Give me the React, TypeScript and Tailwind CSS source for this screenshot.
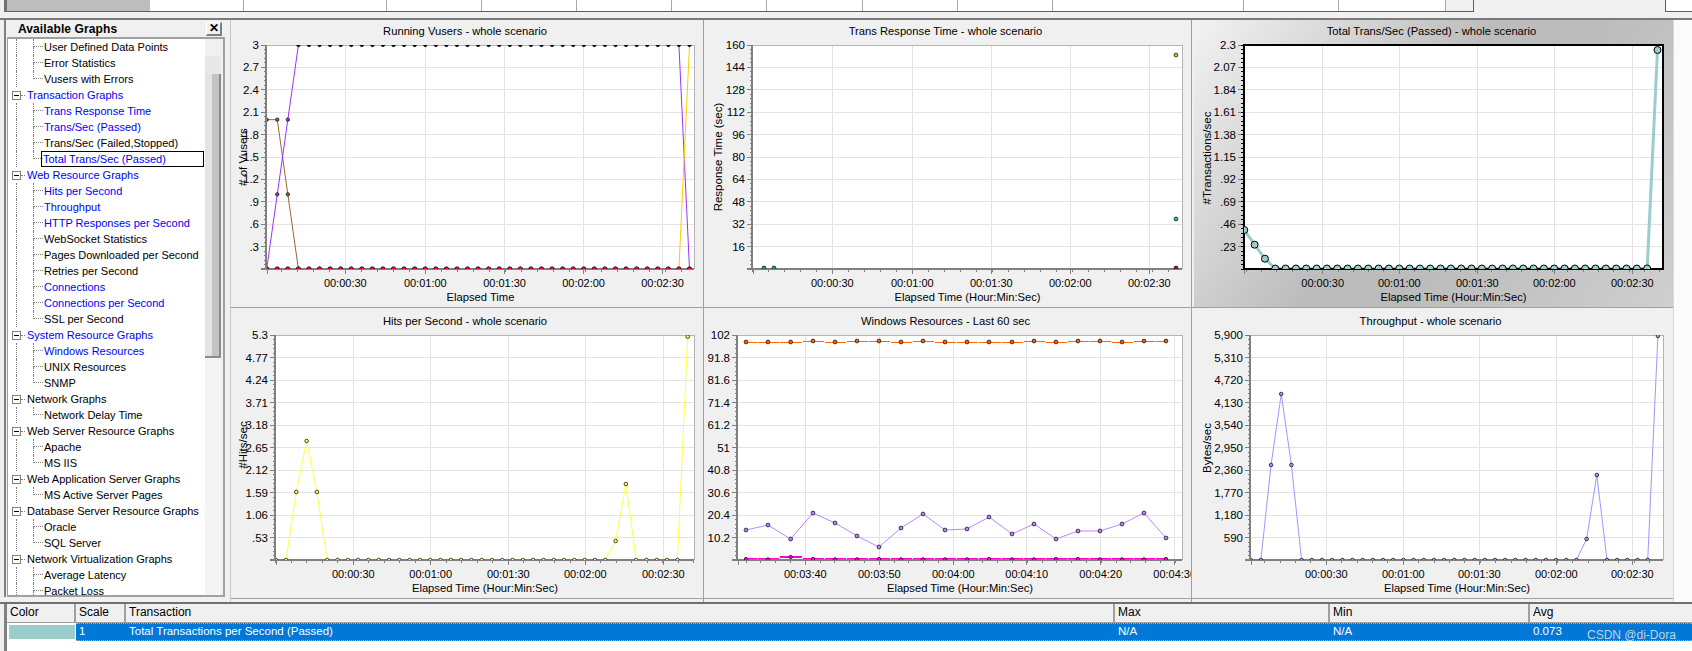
import React from "react";

type Pt = [number, number];
type Series = { color: string; width?: number; pts: Pt[]; r?: number; step?: boolean; noLine?: boolean };
type ChartCfg = {
  title: string; xTitle: string; yTitle?: string; yTitleAt?: Pt;
  x0: number; w: number; top: number; L: number; R: number; T: number; B: number;
  yLabels: string[]; grid: number[]; xLabels: string[]; series: Series[]; selected?: boolean;
  firstRow: boolean; id: string; blackTop?: boolean;
};

const seq = (start: number, dx: number, ys: number[]): Pt[] => ys.map((y, i) => [start + i * dx, y] as Pt);
const fillArr = (n: number, v: number, over: Record<number, number> = {}) =>
  Array.from({ length: n }, (_, i) => (over[i] !== undefined ? over[i] : v));

const y1 = (v: number) => 269 - (v / 3) * 224;
const purple = fillArr(41, 3, { 0: 0, 1: 1, 2: 2, 40: 0 }).map(y1);
const brown = fillArr(41, 0, { 0: 2, 1: 2, 2: 1 }).map(y1);
const gold = fillArr(41, 0, { 40: 3 }).map(y1);
const red = fillArr(41, 0).map(y1);

const z2 = (z: number) => 305 + z / 3;
const ch4 = fillArr(41, 765, { 2: 561, 3: 408, 4: 561, 33: 708, 34: 537, 40: 95 }).map(z2);
const ch6 = fillArr(41, 765, { 2: 480, 3: 267, 4: 480, 33: 702, 34: 510, 40: 93 }).map(z2);
const ch3 = fillArr(41, 268.5, { 0: 230, 1: 244.7, 2: 258.7, 40: 50 });

const x5 = [138, 204, 272, 339, 405, 471, 537, 603, 669, 735, 801, 867, 936, 1002, 1068, 1134, 1200, 1266, 1332, 1398].map((z) => 700 + z / 3);
const zip5 = (zs: number[]): Pt[] => zs.map((z, i) => [x5[i], z2(z)] as Pt);
const orange = [111, 111, 111, 108, 111, 108, 108, 111, 108, 111, 111, 111, 111, 108, 111, 108, 108, 111, 108, 108];
const lilac = [675, 660, 702, 624, 654, 693, 726, 669, 627, 675, 672, 636, 687, 657, 702, 678, 678, 657, 624, 699];
const magenta = [762, 763, 756, 762, 763, 763, 762, 763, 763, 763, 763, 762, 763, 763, 762, 762, 763, 763, 763, 762];

const TIMES = ["00:00:30", "00:01:00", "00:01:30", "00:02:00", "00:02:30"];
const ELAPSED = "Elapsed Time (Hour:Min:Sec)";

const charts: ChartCfg[] = [
  {
    id: "a", title: "Running Vusers - whole scenario", xTitle: "Elapsed Time", yTitle: "# of Vusers", yTitleAt: [243, 157],
    x0: 231, w: 472, top: 38, L: 267, R: 694, T: 45, B: 269, firstRow: true, blackTop: true,
    yLabels: ["3", "2.7", "2.4", "2.1", "1.8", "1.5", "1.2", ".9", ".6", ".3"],
    grid: [345.3, 425.3, 504.6, 583.6, 662.6], xLabels: TIMES,
    series: [
      { color: "#996633", width: 1, pts: seq(266.7, 10.57, brown), r: 1.7 },
      { color: "#9933ff", width: 1, pts: seq(266.7, 10.57, purple), r: 1.7 },
      { color: "#ffcc00", width: 1, pts: seq(266.7, 10.57, gold), r: 1.7 },
      { color: "#ff0055", pts: seq(266.7, 10.57, red), r: 2.2, noLine: true },
    ],
  },
  {
    id: "b", title: "Trans Response Time - whole scenario", xTitle: ELAPSED, yTitle: "Response Time (sec)", yTitleAt: [718, 157],
    x0: 704, w: 487, top: 38, L: 753, R: 1182, T: 45, B: 269, firstRow: true,
    yLabels: ["160", "144", "128", "112", "96", "80", "64", "48", "32", "16"],
    grid: [832.3, 912.3, 991.3, 1070.3, 1149.3], xLabels: TIMES,
    series: [
      { color: "#00aa88", pts: [[764, 268], [774, 268]], r: 1.9, noLine: true },
      { color: "#cccc00", pts: [[1176, 55]], r: 1.9, noLine: true },
      { color: "#00cccc", pts: [[1176, 219]], r: 1.9, noLine: true },
      { color: "#cc0000", pts: [[1176, 268]], r: 1.9, noLine: true },
    ],
  },
  {
    id: "c", title: "Total Trans/Sec (Passed) - whole scenario", xTitle: ELAPSED, yTitle: "#Transactions/sec", yTitleAt: [1207, 158],
    x0: 1194, w: 479, top: 38, L: 1244, R: 1663, T: 45, B: 269, firstRow: true, selected: true,
    yLabels: ["2.3", "2.07", "1.84", "1.61", "1.38", "1.15", ".92", ".69", ".46", ".23"],
    grid: [1322.7, 1399.3, 1477.3, 1554.3, 1632.3], xLabels: TIMES,
    series: [{ color: "#9ccdcd", width: 3, pts: seq(1244.3, 10.33, ch3), r: 3.5 }],
  },
  {
    id: "d", title: "Hits per Second - whole scenario", xTitle: ELAPSED, yTitle: "#Hits/sec", yTitleAt: [243, 445],
    x0: 231, w: 472, top: 329, L: 276, R: 694, T: 335, B: 560, firstRow: false,
    yLabels: ["5.3", "4.77", "4.24", "3.71", "3.18", "2.65", "2.12", "1.59", "1.06", ".53"],
    grid: [353.3, 430.7, 508.3, 585.3, 663.3], xLabels: TIMES,
    series: [{ color: "#ffff44", width: 1, pts: seq(275.7, 10.3, ch4), r: 1.8 }],
  },
  {
    id: "e", title: "Windows Resources - Last 60 sec", xTitle: ELAPSED,
    x0: 704, w: 487, top: 329, L: 738, R: 1182, T: 335, B: 560, firstRow: false,
    yLabels: ["102", "91.8", "81.6", "71.4", "61.2", "51", "40.8", "30.6", "20.4", "10.2"],
    grid: [805.3, 879.3, 953.3, 1026.7, 1100.7, 1174.7],
    xLabels: ["00:03:40", "00:03:50", "00:04:00", "00:04:10", "00:04:20", "00:04:30"],
    series: [
      { color: "#bb88ff", width: 1, pts: zip5(lilac), r: 1.9 },
      { color: "#ff6600", width: 1, pts: zip5(orange), r: 1.9, step: true },
      { color: "#ff00cc", width: 2, pts: zip5(magenta), r: 1.7, step: true },
    ],
  },
  {
    id: "f", title: "Throughput - whole scenario", xTitle: ELAPSED, yTitle: "Bytes/sec", yTitleAt: [1207, 448],
    x0: 1192, w: 481, top: 329, L: 1251, R: 1663, T: 335, B: 560, firstRow: false,
    yLabels: ["5,900", "5,310", "4,720", "4,130", "3,540", "2,950", "2,360", "1,770", "1,180", "590"],
    grid: [1326.3, 1403.3, 1479.3, 1556.3, 1632.3], xLabels: TIMES,
    series: [{ color: "#9999ff", width: 1, pts: seq(1250.7, 10.18, ch6), r: 1.8 }],
  },
];

const stepPath = (pts: Pt[]) => {
  let d = "";
  pts.forEach(([x, y], i) => {
    const left = i === 0 ? x : (pts[i - 1][0] + x) / 2 + 1;
    const right = i === pts.length - 1 ? x : (pts[i + 1][0] + x) / 2;
    const yy = Math.round(y);
    d += `M${left} ${yy}L${right} ${yy}`;
  });
  return d;
};

function Plot({ c }: { c: ChartCfg }) {
  const rowH = (c.B - c.T) / 10;
  const step = (c.grid[1] - c.grid[0]) / 5;
  const ticks: number[] = [];
  for (let x = c.grid[0]; x >= c.L - 1; x -= step) ticks.unshift(x);
  for (let x = c.grid[0] + step; x <= c.R; x += step) ticks.push(x);
  const axis = c.selected ? "#000000" : "#808080";
  const minorY: number[] = [];
  for (let y = c.T; y < c.B; y += rowH / 5) minorY.push(y);
  return (
    <svg className="block h-[252px] w-full shrink-0" viewBox={`${c.x0} ${c.top} ${c.w} 252`}>
      <defs>
        <clipPath id={`clip-${c.id}`}>
          <rect x={c.L} y={c.T} width={c.R - c.L} height={c.B - c.T} />
        </clipPath>
        <clipPath id={`lines-${c.id}`}>
          <rect x={c.L} y={c.T + 1.5} width={c.R - c.L} height={c.B - c.T - 2.5} />
        </clipPath>
      </defs>
      <rect x={c.L} y={c.T} width={c.R - c.L} height={c.B - c.T} fill="#ffffff" />
      <g stroke="#e3e3e3" strokeWidth="1" shapeRendering="crispEdges">
        {c.yLabels.map((_, i) => i > 0 && <line key={i} x1={c.L} x2={c.R} y1={c.T + i * rowH} y2={c.T + i * rowH} />)}
        {c.yLabels.map((_, i) => <line key={`m${i}`} x1={c.L - 6} x2={c.L} y1={c.T + i * rowH} y2={c.T + i * rowH} stroke="#808080" />)}
        {c.grid.map((x) => <line key={x} x1={x} x2={x} y1={c.T} y2={c.B} />)}
      </g>
      <g clipPath={`url(#lines-${c.id})`}>
        {c.series.map((s, i) =>
          s.noLine ? null : s.step ? (
            <path key={i} d={stepPath(s.pts)} fill="none" stroke={s.color} strokeWidth={s.width} shapeRendering="crispEdges" />
          ) : (
            <polyline key={i} points={s.pts.map((p) => p.join(",")).join(" ")} fill="none" stroke={s.color} strokeWidth={s.width} />
          )
        )}
      </g>
      <g shapeRendering="crispEdges">
        {minorY.map((y) => <line key={y} x1={c.L - 3} x2={c.L} y1={y} y2={y} stroke={axis} />)}
        {ticks.map((x) => <line key={x} x1={x} x2={x} y1={c.B} y2={c.B + 3} stroke="#808080" />)}
        {[c.L, ...c.grid].map((x) => <line key={`M${x}`} x1={x} x2={x} y1={c.B} y2={c.B + 5} stroke="#808080" />)}
        {c.selected ? (
          <rect x={c.L} y={c.T} width={c.R - c.L} height={c.B - c.T} fill="none" stroke="#000000" strokeWidth="2" />
        ) : (
          <>
            <line x1={c.L} x2={c.R} y1={c.T} y2={c.T} stroke="#b4b4b4" />
            <line x1={c.R} x2={c.R} y1={c.T} y2={c.B} stroke="#b4b4b4" />
            <line x1={c.L - 6} x2={c.R} y1={c.B} y2={c.B} stroke="#808080" strokeWidth="2" />
            <line x1={c.L - 1} x2={c.L - 1} y1={c.T} y2={c.B} stroke="#808080" strokeWidth="2" />
          </>
        )}
      </g>
      <g clipPath={`url(#clip-${c.id})`}>
        {c.series.map((s, i) =>
          s.pts.map((p, j) => (
            <circle
              key={`${i}-${j}`}
              cx={p[0]}
              cy={p[1]}
              r={s.r}
              fill={c.blackTop && p[1] <= c.T ? "#000000" : s.color}
              stroke="#000000"
              strokeWidth={c.selected ? 1 : 0.7}
            />
          ))
        )}
      </g>
      <g fontSize="11.5" fill="#000000" fontFamily="'Liberation Sans', sans-serif">
        {c.yLabels.map((l, i) => (
          <text key={l} x={c.L - 8} y={c.T + i * rowH + 4} textAnchor="end">{l}</text>
        ))}
        {c.xLabels.map((l, i) => (
          <text key={l} x={c.grid[i]} y={c.B + 18} textAnchor="middle" fontSize="11">{l}</text>
        ))}
        {c.yTitle && c.yTitleAt && (
          <text transform={`translate(${c.yTitleAt[0] + 4} ${c.yTitleAt[1]}) rotate(-90)`} textAnchor="middle">{c.yTitle}</text>
        )}
      </g>
    </svg>
  );
}

function ChartPanel({ c }: { c: ChartCfg }) {
  const pad = c.firstRow ? "h-[18px] pt-[3px]" : "h-[21px] pt-[5px]";
  const bg = c.selected
    ? "bg-[linear-gradient(125deg,#f2f2f2_0%,#bcbcbc_45%,#bcbcbc_60%,#cfcfcf_100%)]"
    : "bg-[#f0f0f0]";
  return (
    <div className={`${bg} overflow-hidden flex flex-col ${c.firstRow ? "h-[287px]" : "h-[290px]"}`}>
      <div className={`${pad} shrink-0 pr-[4px] text-center text-[11.2px] leading-[16px]`}>{c.title}</div>
      <Plot c={c} />
      <div
        className="h-[14px] shrink-0 text-center text-[11.2px] leading-[14px]"
        style={{ paddingLeft: c.L - c.x0, paddingRight: c.x0 + c.w - c.R }}
      >
        {c.xTitle}
      </div>
    </div>
  );
}

type TreeItem = { label: string; blue?: boolean; selected?: boolean };
type TreeGroup = { label?: string; blue?: boolean; items: TreeItem[]; open?: boolean };

const tree: TreeGroup[] = [
  { items: [{ label: "User Defined Data Points" }, { label: "Error Statistics" }, { label: "Vusers with Errors" }] },
  {
    label: "Transaction Graphs", blue: true,
    items: [
      { label: "Trans Response Time", blue: true }, { label: "Trans/Sec (Passed)", blue: true },
      { label: "Trans/Sec (Failed,Stopped)" }, { label: "Total Trans/Sec (Passed)", blue: true, selected: true },
    ],
  },
  {
    label: "Web Resource Graphs", blue: true,
    items: [
      { label: "Hits per Second", blue: true }, { label: "Throughput", blue: true },
      { label: "HTTP Responses per Second", blue: true }, { label: "WebSocket Statistics" },
      { label: "Pages Downloaded per Second" }, { label: "Retries per Second" },
      { label: "Connections", blue: true }, { label: "Connections per Second", blue: true }, { label: "SSL per Second" },
    ],
  },
  {
    label: "System Resource Graphs", blue: true,
    items: [{ label: "Windows Resources", blue: true }, { label: "UNIX Resources" }, { label: "SNMP" }],
  },
  { label: "Network Graphs", items: [{ label: "Network Delay Time" }] },
  { label: "Web Server Resource Graphs", items: [{ label: "Apache" }, { label: "MS IIS" }] },
  { label: "Web Application Server Graphs", items: [{ label: "MS Active Server Pages" }] },
  { label: "Database Server Resource Graphs", items: [{ label: "Oracle" }, { label: "SQL Server" }] },
  { label: "Network Virtualization Graphs", open: true, items: [{ label: "Average Latency" }, { label: "Packet Loss" }] },
];

function TreeChild({ item, last }: { item: TreeItem; last: boolean }) {
  return (
    <div className="flex h-[16px] shrink-0 items-stretch">
      <span className="ml-[8px] w-[17px] shrink-0 border-l border-dotted border-[#808080]" />
      <span className="flex w-[10px] shrink-0 flex-col">
        <span className="h-[8px] border-b border-l border-dotted border-[#808080]" />
        <span className={`h-[8px] border-dotted border-[#808080] ${last ? "" : "border-l"}`} />
      </span>
      <span
        className={`flex items-center whitespace-nowrap pl-[1px] ${item.blue ? "text-[#0000ff]" : "text-black"} ${
          item.selected ? "ml-[-2px] w-[163px] border border-black" : ""
        }`}
      >
        {item.label}
      </span>
    </div>
  );
}

function TreeParent({ g }: { g: TreeGroup }) {
  return (
    <div className="flex h-[16px] shrink-0 items-center">
      <span className="ml-[4px] flex h-[9px] w-[9px] shrink-0 items-center justify-center border border-[#808080] bg-white">
        <span className="h-px w-[5px] bg-black" />
      </span>
      <span className="w-[4px] shrink-0 border-b border-dotted border-[#808080]" />
      <span className={`whitespace-nowrap pl-[2px] ${g.blue ? "text-[#0000ff]" : "text-black"}`}>{g.label}</span>
    </div>
  );
}

function LeftPanel() {
  return (
    <div className="flex h-[577px] w-[221px] shrink-0 flex-col border-l-2 border-[#808080]">
      <div className="flex h-[17px] shrink-0 items-center justify-between pl-[12px] pr-[2px]">
        <span className="text-[12px] font-bold tracking-[0.1px] text-black">Available Graphs</span>
        <span className="mr-px flex h-[14px] w-[16px] items-center justify-center border-b-2 border-l border-r-2 border-t border-b-[#808080] border-l-white border-r-[#808080] border-t-white text-[12px] font-bold leading-none">
          ✕
        </span>
      </div>
      <div className="ml-[1px] flex min-h-0 flex-1 border-b-2 border-l border-r-2 border-t-2 border-[#a0a0a0]">
        <div className="flex w-[197px] shrink-0 flex-col overflow-hidden bg-white text-[11px] leading-[16px]">
          {tree.map((g, i) => (
            <React.Fragment key={i}>
              {g.label && <TreeParent g={g} />}
              {g.items.map((it, j) => (
                <TreeChild key={j} item={it} last={!g.open && j === g.items.length - 1} />
              ))}
            </React.Fragment>
          ))}
        </div>
        <div className="flex w-[16px] shrink-0 flex-col">
          <div className="h-[17px] shrink-0 bg-[#f0f0f0]" />
          <div className="h-[18px] shrink-0 bg-[#e8e8e8]" />
          <div className="flex h-[284px] shrink-0 border-b-2 border-r-2 border-[#8c8c8c]">
            <div className="w-[7px] bg-[#e4e4e4]" />
            <div className="flex-1 bg-[#c4c4c4]" />
          </div>
          <div className="flex-1 bg-[#f4f4f4]" />
        </div>
      </div>
    </div>
  );
}

const stripWidths = [94, 143, 95, 95, 95, 95, 96, 95, 95, 191, 95, 107];

function TopStrip() {
  return (
    <div className="flex h-[12px] shrink-0">
      <div className="ml-[4px] h-full w-[3px] bg-[#707070]" />
      <div className="flex h-full border-b border-[#606060] bg-white">
        <div className="h-full w-[143px] bg-[#bdbdbd]" />
        {stripWidths.map((w, i) => (
          <div key={i} className="h-full shrink-0 border-r border-[#a8a8a8]" style={{ width: w }} />
        ))}
        <div className="h-full w-[28px] border-r border-[#606060] bg-[#f0f0f0]" />
      </div>
      <div className="w-[191px] shrink-0" />
      <div className="flex-1 border-b border-l border-[#606060] bg-white" />
    </div>
  );
}

const cols = [
  { w: "w-[69px]", h: "Color" },
  { w: "w-[50px]", h: "Scale" },
  { w: "w-[989px]", h: "Transaction" },
  { w: "w-[215px]", h: "Max" },
  { w: "w-[200px]", h: "Min" },
  { w: "w-[162px]", h: "Avg" },
];

function BottomTable() {
  const cells = ["1", "Total Transactions per Second (Passed)", "N/A", "N/A", "0.073"];
  return (
    <div className="relative flex min-h-0 flex-1 flex-col border-t-2 border-[#707070] text-[11px]">
      <div className="ml-[4px] flex h-full flex-col border-l-[3px] border-[#808080] bg-white">
        <div className="flex h-[19px] shrink-0 border-b border-[#a0a0a0] bg-[#f0f0f0]">
          {cols.map((c) => (
            <div key={c.h} className={`${c.w} shrink-0 border-r-2 border-[#a0a0a0] pl-[3px] text-[12px] leading-[17px] last:border-r-0`}>
              {c.h}
            </div>
          ))}
        </div>
        <div className="flex h-[18px] shrink-0">
          <div className="flex w-[69px] shrink-0 items-center pl-[2px]">
            <div className="h-[14px] w-[66px] bg-[#9ccdcd]" />
          </div>
          <div className="flex flex-1 border-y border-dotted border-[#ff9a3c] bg-[#0078d7] text-white">
            {cols.slice(1).map((c, i) => (
              <div key={c.h} className={`${c.w} shrink-0 pl-[3px] text-[11.5px] leading-[14px]`}>
                {cells[i]}
              </div>
            ))}
          </div>
        </div>
      </div>
      <span className="absolute left-[1587px] top-[24px] text-[12px] leading-[14px] text-[#c4d2de]">CSDN @di-Dora</span>
    </div>
  );
}

export default function App() {
  const [a, b, c, d, e, f] = charts;
  return (
    <div className="flex h-[651px] w-[1692px] flex-col overflow-hidden bg-[#f0f0f0] text-black [font-family:'Liberation_Sans',sans-serif]">
      <TopStrip />
      <div className="mt-[6px] flex h-[584px] shrink-0 border-t-2 border-[#7a7a7a]">
        <div className="ml-[4px]">
          <LeftPanel />
        </div>
        <div className="ml-[5px] flex shrink-0">
          <div className="flex w-[473px] flex-col border-l border-[#c8c8c8]">
            <div className="border-b border-[#a0a0a0]"><ChartPanel c={a} /></div>
            <div className="border-b border-[#a0a0a0]"><ChartPanel c={d} /></div>
          </div>
          <div className="flex w-[488px] flex-col border-l border-[#a0a0a0]">
            <div className="border-b border-[#a0a0a0]"><ChartPanel c={b} /></div>
            <div className="border-b border-[#a0a0a0]"><ChartPanel c={e} /></div>
          </div>
          <div className="flex w-[482px] flex-col border-l border-[#a0a0a0]">
            <div className="border-b border-[#a0a0a0] pl-[2px]"><ChartPanel c={c} /></div>
            <div className="border-b border-[#a0a0a0]"><ChartPanel c={f} /></div>
          </div>
        </div>
        <div className="flex-1 border-l border-[#d8d8d8] bg-[#fbfbfb]" />
      </div>
      <BottomTable />
    </div>
  );
}
